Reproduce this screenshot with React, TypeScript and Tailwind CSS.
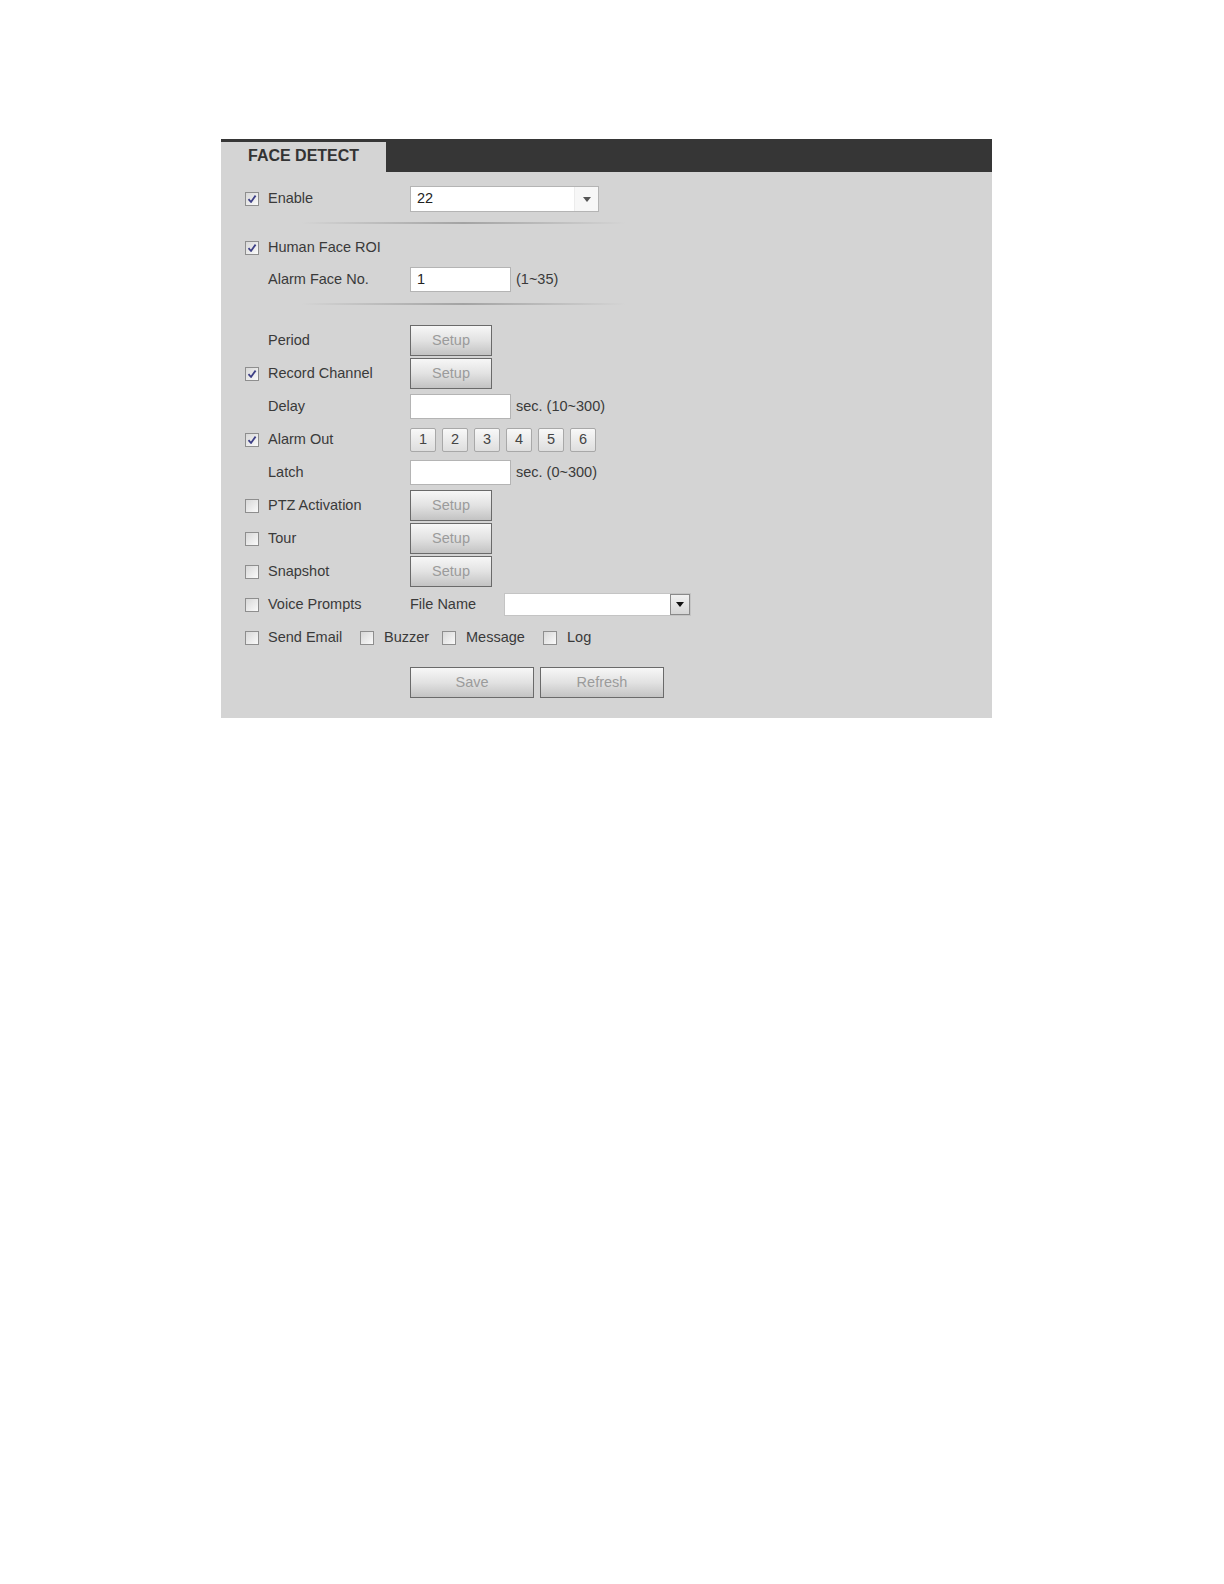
import React from "react";

const font = { fontFamily: '"Liberation Sans", Arial, sans-serif' };

function CheckBox({ checked }: { checked: boolean }) {
  return (
    <span className="flex h-[14px] w-[14px] shrink-0 items-center justify-center border border-[#8e8e8e] bg-gradient-to-br from-[#d8d8d8] to-[#fafafa]">
      {checked && (
        <svg width="10" height="10" viewBox="0 0 10 10">
          <path d="M1.5 5.2 L4 8 L8.6 1.6" fill="none" stroke="#3d3f86" strokeWidth="1.8" strokeLinejoin="round" />
        </svg>
      )}
    </span>
  );
}

function Row({
  check,
  label,
  children,
}: {
  check?: boolean;
  label: string;
  children?: React.ReactNode;
}) {
  return (
    <div className="flex h-[33px] items-center pl-[24px]">
      <span className="flex w-[14px] shrink-0">{check !== undefined && <CheckBox checked={check} />}</span>
      <span className="ml-[9px] w-[142px] shrink-0 text-[14.5px] text-[#3a3a3a]">{label}</span>
      <div className="flex items-center">{children}</div>
    </div>
  );
}

function SetupButton({ text = "Setup", width = "w-[82px]" }: { text?: string; width?: string }) {
  return (
    <button
      className={`${width} h-[31px] border border-[#6a6a6a] bg-gradient-to-b from-[#f7f7f7] via-[#e2e2e2] to-[#c3c3c3] text-[14.5px] text-[#9b9b9b]`}
    >
      {text}
    </button>
  );
}

function TextBox({ value = "" }: { value?: string }) {
  return (
    <div className="flex h-[25px] w-[101px] items-center border border-[#b4b4b4] bg-white pl-[6px] text-[14.5px] text-[#222]">
      {value}
    </div>
  );
}

function Separator() {
  return (
    <div className="flex h-[16px] items-center pl-[80px]">
      <div className="h-[2px] w-[325px] bg-gradient-to-r from-transparent via-[#a3a3a3] to-transparent" />
    </div>
  );
}

export default function App() {
  return (
    <div className="min-h-[1584px] bg-white pl-[221px] pt-[139px]" style={font}>
      <div className="w-[771px] bg-[#d4d4d4] pb-[20px]">
        <div className="flex h-[33px] bg-[#363636]">
          <div className="flex w-[165px] items-center border-t-[3px] border-[#363636] bg-[#d4d4d4] pb-[3px] pl-[27px] text-[16px] font-bold text-[#333]">
            FACE DETECT
          </div>
        </div>

        <div className="pt-[13px]">
          <div className="flex h-[28px] items-center pl-[24px]">
            <CheckBox checked />
            <span className="ml-[9px] w-[142px] text-[14.5px] text-[#3a3a3a]">Enable</span>
            <div className="flex h-[26px] w-[189px] border border-[#b4b4b4] bg-white">
              <span className="flex flex-1 items-center pl-[6px] text-[14.5px] text-[#222]">22</span>
              <span className="flex w-[24px] items-center justify-center border-l border-[#ececec] bg-[#f7f7f7]">
                <svg width="8" height="5" viewBox="0 0 8 5">
                  <path d="M0 0 H8 L4 5 Z" fill="#555" />
                </svg>
              </span>
            </div>
          </div>

          <div className="flex h-[20px] items-center pl-[80px]">
            <div className="h-[2px] w-[325px] bg-gradient-to-r from-transparent via-[#a3a3a3] to-transparent" />
          </div>

          <div className="flex h-[30px] items-center pl-[24px]">
            <CheckBox checked />
            <span className="ml-[9px] text-[14.5px] text-[#3a3a3a]">Human Face ROI</span>
          </div>

          <Row label="Alarm Face No.">
            <TextBox value="1" />
            <span className="ml-[5px] text-[14.5px] text-[#3a3a3a]">(1~35)</span>
          </Row>

          <Separator />

          <div className="pt-[12px]">
            <Row label="Period">
              <SetupButton />
            </Row>
            <Row check label="Record Channel">
              <SetupButton />
            </Row>
            <Row label="Delay">
              <TextBox />
              <span className="ml-[5px] text-[14.5px] text-[#3a3a3a]">sec. (10~300)</span>
            </Row>
            <Row check label="Alarm Out">
              <div className="flex gap-[6px]">
                {["1", "2", "3", "4", "5", "6"].map((n) => (
                  <span
                    key={n}
                    className="flex h-[24px] w-[26px] items-center justify-center rounded-[2px] border border-[#a8a8a8] bg-gradient-to-b from-[#f8f8f8] to-[#dedede] text-[14.5px] text-[#444]"
                  >
                    {n}
                  </span>
                ))}
              </div>
            </Row>
            <Row label="Latch">
              <TextBox />
              <span className="ml-[5px] text-[14.5px] text-[#3a3a3a]">sec. (0~300)</span>
            </Row>
            <Row check={false} label="PTZ Activation">
              <SetupButton />
            </Row>
            <Row check={false} label="Tour">
              <SetupButton />
            </Row>
            <Row check={false} label="Snapshot">
              <SetupButton />
            </Row>
            <Row check={false} label="Voice Prompts">
              <span className="w-[94px] text-[14.5px] text-[#3a3a3a]">File Name</span>
              <div className="flex h-[23px] w-[187px] border border-[#c4c4c4] bg-white">
                <span className="flex-1" />
                <span className="flex w-[20px] items-center justify-center border border-[#8a8a8a] bg-gradient-to-b from-[#f2f2f2] to-[#d6d6d6]">
                  <svg width="8" height="5" viewBox="0 0 8 5">
                    <path d="M0 0 H8 L4 5 Z" fill="#111" />
                  </svg>
                </span>
              </div>
            </Row>

            <div className="flex h-[33px] items-center pl-[24px] text-[14.5px] text-[#3a3a3a]">
              <div className="flex w-[115px] items-center">
                <CheckBox checked={false} />
                <span className="ml-[9px]">Send Email</span>
              </div>
              <div className="flex w-[82px] items-center">
                <CheckBox checked={false} />
                <span className="ml-[10px]">Buzzer</span>
              </div>
              <div className="flex w-[101px] items-center">
                <CheckBox checked={false} />
                <span className="ml-[10px]">Message</span>
              </div>
              <div className="flex items-center">
                <CheckBox checked={false} />
                <span className="ml-[10px]">Log</span>
              </div>
            </div>
          </div>

          <div className="mt-[13px] flex gap-[6px] pl-[189px]">
            <SetupButton text="Save" width="w-[124px]" />
            <SetupButton text="Refresh" width="w-[124px]" />
          </div>
        </div>
      </div>
    </div>
  );
}
